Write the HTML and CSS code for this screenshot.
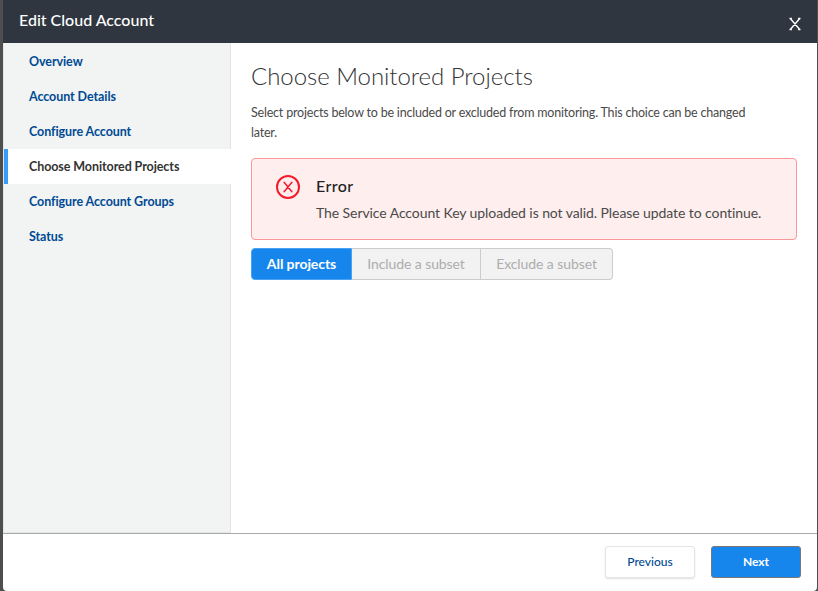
FILE: index.html
```html
<!DOCTYPE html>
<html lang="en">
<head>
<meta charset="utf-8">
<title>Edit Cloud Account</title>
<link rel="stylesheet" href="styles.css">
</head>
<body>
<div class="modal">
  <header class="header">
    <h1 class="header-title">Edit Cloud Account</h1>
    <button class="close" aria-label="Close"><svg width="12" height="14" viewBox="0 0 12 14" fill="none" stroke="currentColor" stroke-width="1.4"><path d="M1.5 1.7 10.5 12.3M10.5 1.7 1.5 12.3M.5 1.5h2.4M9.1 1.5h2.4M.5 12.5h2.4M9.1 12.5h2.4"/></svg></button>
  </header>
  <div class="body">
    <nav class="sidebar">
      <a class="step">Overview</a>
      <a class="step">Account Details</a>
      <a class="step">Configure Account</a>
      <a class="step step-active">Choose Monitored Projects</a>
      <a class="step">Configure Account Groups</a>
      <a class="step">Status</a>
    </nav>
    <main class="content">
      <h2 class="title">Choose Monitored Projects</h2>
      <p class="intro">Select projects below to be included or excluded from monitoring. This choice can be changed later.</p>
      <section class="alert">
        <svg class="alert-icon" width="24" height="24" viewBox="0 0 24 24" fill="none" stroke="currentColor"><circle cx="12" cy="12" r="11" stroke-width="2"/><path stroke-width="1.5" d="M8.3 7.5l7.4 9M15.7 7.5l-7.4 9M7.5 7.5h1.8M14.7 7.5h1.8M7.5 16.5h1.8M14.7 16.5h1.8"/></svg>
        <div>
          <h3 class="alert-title">Error</h3>
          <p class="alert-text">The Service Account Key uploaded is not valid. Please update to continue.</p>
        </div>
      </section>
      <div class="segments">
        <button class="segment segment-active">All projects</button>
        <button class="segment segment-include">Include a subset</button>
        <button class="segment segment-exclude">Exclude a subset</button>
      </div>
    </main>
  </div>
  <footer class="footer">
    <button class="button">Previous</button>
    <button class="button button-primary">Next</button>
  </footer>
</div>
</body>
</html>
```
FILE: styles.css
```css
* { box-sizing: border-box; }
body {
  margin: 0;
  height: 591px;
  padding: 0 1px 0 3px;
  overflow: hidden;
  background: #4e4e4e;
  font-family: Lato, "Liberation Sans", sans-serif;
  color: #333;
}
h1, h2, h3, p { margin: 0; }
button { font-family: inherit; padding: 0; }
.modal {
  height: 591px;
  display: grid;
  grid-template-rows: 43px 490px 58px;
  background: #fff;
  border-radius: 0 0 4px 4px;
  overflow: hidden;
}
.header {
  display: flex;
  justify-content: space-between;
  padding: 0 16px;
  background: #2f3640;
  color: #fff;
}
.header-title { font-size: 16px; font-weight: 500; line-height: 39px; }
.close {
  display: flex;
  align-items: center;
  border: 0;
  padding-top: 5px;
  background: none;
  color: #fff;
}
.body { display: grid; grid-template-columns: 228px 1fr; }
.sidebar {
  display: flex;
  flex-direction: column;
  padding-top: 1px;
  border: solid #e4e5e5;
  border-width: 0 0 1px 1px;
  background: linear-gradient(#e4e5e5, #e4e5e5) right / 1px 100% no-repeat #f1f4f3;
}
.step {
  height: 35px;
  padding-left: 25px;
  font-size: 12.5px;
  font-weight: 700;
  line-height: 35px;
  letter-spacing: -.08px;
  font-variant-ligatures: common-ligatures;
  color: #004a93;
}
.step-active {
  padding-left: 21px;
  border-left: 4px solid #389bf7;
  background: #fff;
  color: #333;
}
.content { padding: 16px 20px 0; }
.title { font-size: 24px; font-weight: 300; line-height: 34px; letter-spacing: -.04px; }
.intro {
  width: 520px;
  margin-top: 10px;
  font-size: 12.5px;
  line-height: 20px;
  letter-spacing: -.2px;
  color: #4a4a4a;
}
.alert {
  display: flex;
  gap: 16px;
  height: 82px;
  margin-top: 15px;
  padding: 16px 24px;
  border: 1px solid #fb9797;
  border-radius: 4px;
  background: #ffeeee;
}
.alert-icon { color: #f51b2b; }
.alert-title { font-size: 16px; font-weight: 500; line-height: 22px; letter-spacing: .4px; color: #222; }
.alert-text { margin-top: 5px; font-size: 14px; line-height: 22px; letter-spacing: -.08px; color: #4a4a4a; }
.segments { display: flex; margin-top: 8px; }
.segment {
  height: 32px;
  padding-bottom: 2px;
  border: solid #ccc;
  border-width: 1px 1px 1px 0;
  background: #f2f2f2;
  color: #adadad;
  font-size: 14px;
  letter-spacing: -.08px;
}
.segment-active {
  width: 101px;
  border: 1px solid #48a2f5;
  border-radius: 4px 0 0 4px;
  background: #1786ec;
  color: #fff;
  font-weight: 700;
}
.segment-include { width: 129px; }
.segment-exclude { width: 132px; border-radius: 0 4px 4px 0; }
.footer {
  display: flex;
  justify-content: flex-end;
  gap: 16px;
  padding: 12px 16px;
  border-top: 1px solid #aaa;
}
.button {
  width: 90px;
  height: 32px;
  padding-bottom: 1px;
  border: 1px solid #e6e6e6;
  border-radius: 3px;
  background: #fff;
  box-shadow: 0 1px 2px rgba(0, 0, 0, .12);
  color: #004a93;
  font-size: 12px;
  font-weight: 500;
}
.button-primary {
  border-color: #777;
  background: #1786ec;
  box-shadow: none;
  color: #fff;
  font-weight: 700;
}
```
